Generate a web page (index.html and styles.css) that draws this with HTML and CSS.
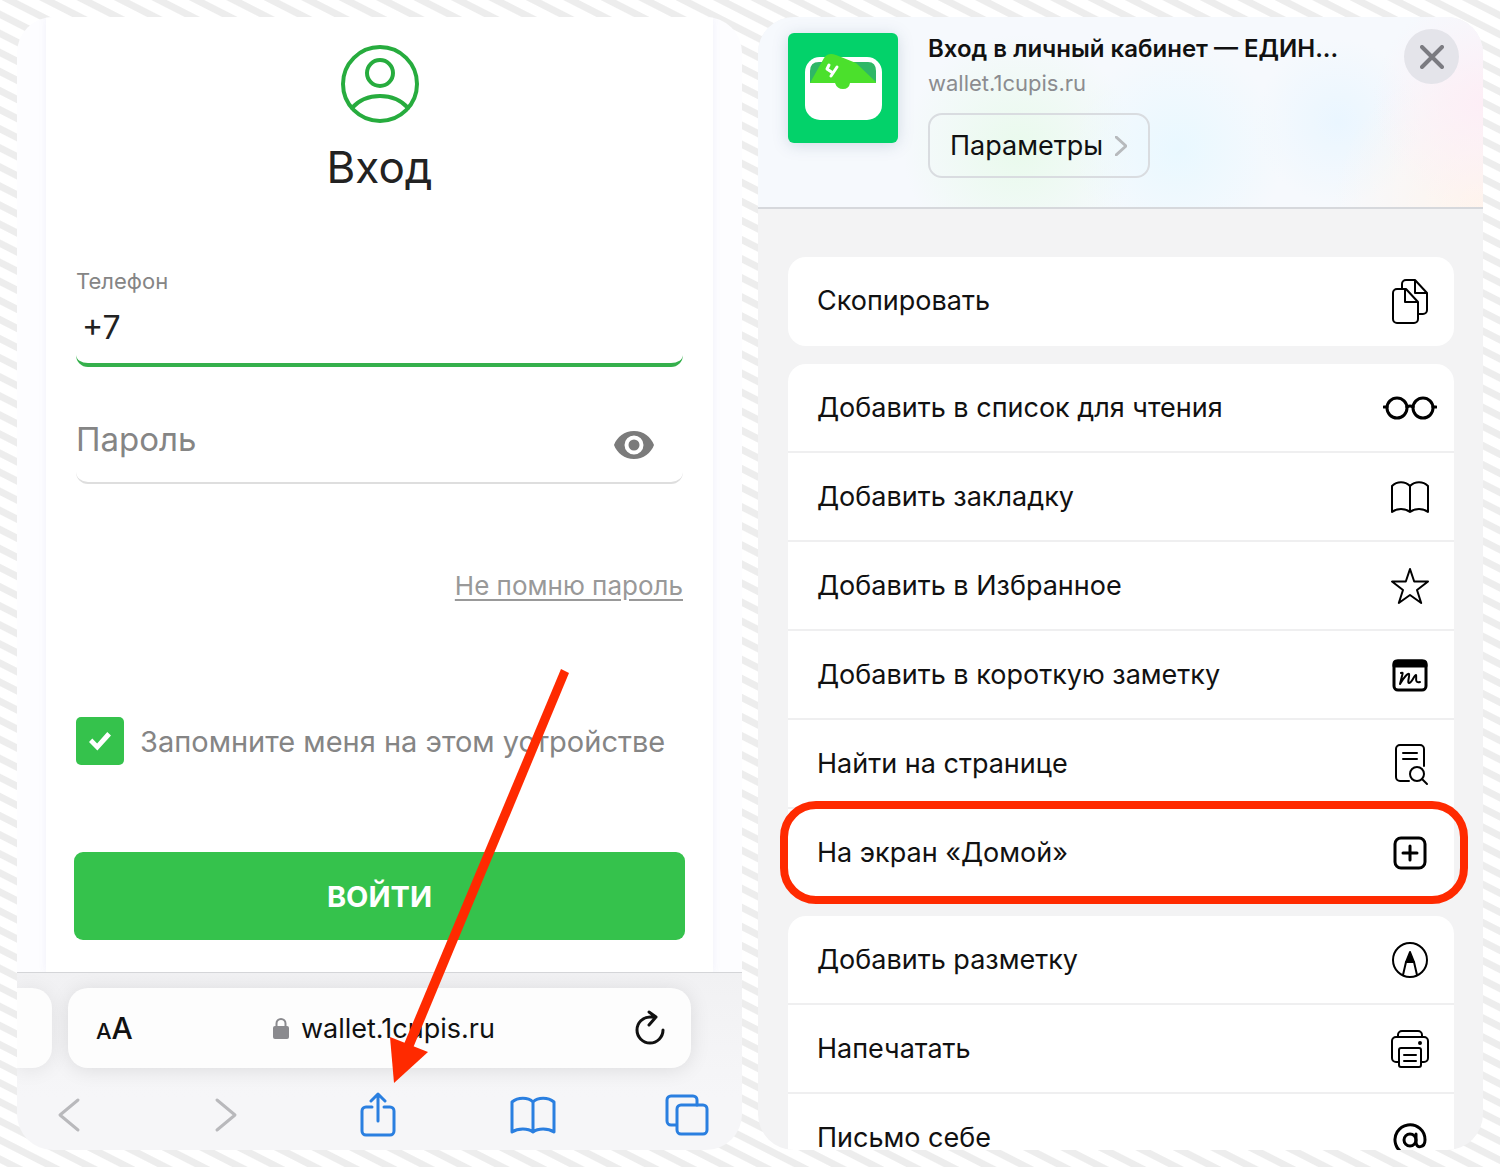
FILE: index.html
```html
<!DOCTYPE html>
<html lang="ru">

<head>
    <meta charset="UTF-8">
    <meta name="viewport" content="width=device-width, initial-scale=1.0">
    <title>Вход в личный кабинет</title>
    <link rel="stylesheet" href="styles.css">
</head>

<body>
    <main class="screens">
        <section class="screen safari">
            <div class="page">
                <form class="login">
                    <svg class="login-icon" viewBox="0 0 78 78">
                        <circle cx="39" cy="39" r="37" />
                        <circle cx="39" cy="28" r="13" />
                        <path d="M11 63C18 55 28 51 39 51s21 4 28 12" />
                    </svg>
                    <h1>Вход</h1>

                    <div class="field field-active">
                        <label for="phone">Телефон</label>
                        <input type="tel" id="phone" name="phone" value="+7">
                    </div>
                    <div class="field field-password">
                        <label for="password">Пароль</label>
                        <input type="password" id="password" name="password">
                        <button type="button" class="eye" aria-label="Показать пароль">
                            <svg viewBox="0 0 42 30">
                                <path fill-rule="evenodd" d="M21 1C11.500 1 4 7 1 15c3 8 10.500 14 20 14s17-6 20-14C38 7 30.500 1 21 1zm0 4.500a9.500 9.500 0 1 1 0 19 9.500 9.500 0 0 1 0-19zm0 4a5.500 5.500 0 1 0 0 11 5.500 5.500 0 0 0 0-11z" />
                            </svg>
                        </button>
                    </div>

                    <a href="#" class="forgot">Не помню пароль</a>

                    <div class="remember">
                        <input type="checkbox" id="remember" name="remember" checked>
                        <label for="remember">Запомните меня на этом устройстве</label>
                    </div>
                    <button type="submit" class="enter">ВОЙТИ</button>
                </form>
            </div>

            <div class="browser-bar">
                <div class="tabs">
                    <div class="tab-prev"></div>
                    <div class="address">
                        <button type="button" class="text-size" aria-label="Размер текста"><small>A</small>A</button>
                        <div class="url">
                            <svg class="lock" viewBox="0 0 16 22">
                                <path class="shackle" d="M3.500 11V6.500a4.500 4.500 0 0 1 9 0V11" />
                                <rect x="0" y="9" width="16" height="13" rx="2" />
                            </svg>
                            <span>wallet.1cupis.ru</span>
                        </div>
                        <button type="button" class="reload" aria-label="Обновить">
                            <svg viewBox="0 0 30 36">
                                <path d="M28 20a13 13 0 1 1-13-13h6M14 2l7 5-7 8" />
                            </svg>
                        </button>
                    </div>
                    <div class="tab-next"></div>
                </div>
                <nav class="tools">
                    <button type="button" class="disabled" aria-label="Назад">
                        <svg viewBox="0 0 46 46"><path d="M32 8L14 23l18 15" /></svg>
                    </button>
                    <button type="button" class="disabled" aria-label="Вперёд">
                        <svg viewBox="0 0 46 46"><path d="M16 8l18 15-18 15" /></svg>
                    </button>
                    <button type="button" aria-label="Поделиться">
                        <svg viewBox="0 0 46 46"><path d="M17 15h-6a4 4 0 0 0-4 4v20a4 4 0 0 0 4 4h24a4 4 0 0 0 4-4V19a4 4 0 0 0-4-4h-6M23 29V2M16 9l7-7 7 7" /></svg>
                    </button>
                    <button type="button" aria-label="Закладки">
                        <svg viewBox="0 0 46 46"><path d="M23 10c-5-5-15-5-21 0v30c6-4 16-4 21 0 5-4 15-4 21 0V10c-6-5-16-5-21 0zM23 10v30" /></svg>
                    </button>
                    <button type="button" aria-label="Вкладки">
                        <svg viewBox="0 0 46 46">
                            <path d="M12 33H7a4 4 0 0 1-4-4V8a4 4 0 0 1 4-4h22a4 4 0 0 1 4 4v5" />
                            <rect x="13" y="13" width="30" height="29" rx="4" />
                        </svg>
                    </button>
                </nav>
            </div>

            <svg class="arrow" viewBox="0 0 190 425">
                <path d="M176 4l8 4L28 383l-9-4z" />
                <path d="M5 372l38 15L9 418z" />
            </svg>
        </section>

        <section class="screen share">
            <header class="share-header">
                <svg class="app-icon" viewBox="0 0 110 110">
                    <rect width="110" height="110" rx="6" fill="#03d26a" />
                    <rect x="17" y="24" width="77" height="63" rx="15" fill="#fff" />
                    <path d="M22 50V38q0-9 9-9h49q8 0 8 9v12z" fill="#2fb766" />
                    <path d="M22 50l14-25q4-6 12-3l20 8 20 19v1H62q-1 6-7 6t-8-6z" fill="#4be02c" />
                    <path d="M41 32l-2 4 6 4M49 34l-6 9" fill="none" stroke="#fff" stroke-width="3" />
                </svg>
                <div class="share-info">
                    <h2>Вход в личный кабинет — ЕДИН...</h2>
                    <p>wallet.1cupis.ru</p>
                    <button type="button" class="options">
                        Параметры
                        <svg viewBox="0 0 12 20"><path d="M1 1l10 9-10 9" /></svg>
                    </button>
                </div>
                <button type="button" class="close" aria-label="Закрыть">
                    <svg viewBox="0 0 24 24"><path d="M2 2l20 20M22 2L2 22" /></svg>
                </button>
            </header>

            <div class="actions">
                <ul class="group">
                    <li><button type="button">Скопировать
                        <svg viewBox="0 0 54 54">
                            <path d="M19 14V10a4 4 0 0 1 4-4h9l12 13v17a4 4 0 0 1-4 4h-4M32 6v13h12" />
                            <path d="M10 19a4 4 0 0 1 4-4h9l12 13v17a4 4 0 0 1-4 4H14a4 4 0 0 1-4-4zM22 15v13h13" />
                        </svg></button></li>
                </ul>
                <ul class="group">
                    <li><button type="button">Добавить в список для чтения
                        <svg class="bold" viewBox="0 0 54 54">
                            <circle cx="14" cy="27" r="10" />
                            <circle cx="40" cy="27" r="10" />
                            <path d="M24 26q3-2 6 0M1 26h3M50 26h3" />
                        </svg></button></li>
                    <li><button type="button">Добавить закладку
                        <svg viewBox="0 0 54 54"><path d="M27 16c-5-5-13-5-18 0v26c5-4 13-4 18 0 5-4 13-4 18 0V16c-5-5-13-5-18 0zM27 16v26" /></svg></button></li>
                    <li><button type="button">Добавить в Избранное
                        <svg viewBox="0 0 54 54"><path d="M27 10l4.200 12.500H45L34 31l4.200 13L27 36l-11.200 8L20 31 9 22.500h13.800z" /></svg></button></li>
                    <li><button type="button">Добавить в короткую заметку
                        <svg class="bold" viewBox="0 0 54 54">
                            <rect x="11" y="13" width="32" height="29" rx="4" />
                            <path class="solid" d="M11 18v-2q0-3 3-3h26q3 0 3 3v2z" />
                            <path class="scribble" d="M18 25c2-1 2 0 1 3l-2 8c4-7 8-11 9-10 1 1-2 9 0 9 3 0 5-8 7-8 1 1-2 9 4 7" />
                        </svg></button></li>
                    <li><button type="button">Найти на странице
                        <svg viewBox="0 0 54 54">
                            <path d="M26 44H17a4 4 0 0 1-4-4V12a4 4 0 0 1 4-4h20a4 4 0 0 1 4 4v17M20 16h14M20 22h14" />
                            <circle cx="34" cy="37" r="7" />
                            <path d="M39 42l5 5" />
                        </svg></button></li>
                    <li class="highlight"><button type="button">На экран «Домой»
                        <svg class="bold" viewBox="0 0 54 54">
                            <rect x="12" y="12" width="30" height="30" rx="6" />
                            <path d="M27 20v14M20 27h14" />
                        </svg></button></li>
                </ul>
                <ul class="group">
                    <li><button type="button">Добавить разметку
                        <svg viewBox="0 0 54 54">
                            <circle cx="27" cy="27" r="17" />
                            <path d="M20 42l3-13h8l3 13" />
                            <path class="solid" d="M23 29l4-10 4 10z" />
                        </svg></button></li>
                    <li><button type="button">Напечатать
                        <svg viewBox="0 0 54 54">
                            <path d="M16 40h-3a4 4 0 0 1-4-4V19a4 4 0 0 1 4-4h28a4 4 0 0 1 4 4v17a4 4 0 0 1-4 4h-3M15 15v-2a4 4 0 0 1 4-4h16a4 4 0 0 1 4 4v2" />
                            <rect x="16" y="26" width="22" height="19" rx="2" />
                            <path d="M21 33h12M21 39h12" />
                            <circle class="solid" cx="37" cy="21" r="1" />
                        </svg></button></li>
                    <li><button type="button">Письмо себе
                        <svg class="bold" viewBox="0 0 54 54">
                            <circle cx="27" cy="29" r="6" />
                            <path d="M33 23v8c0 7 9 6 9-2a15 15 0 1 0-8 13" />
                        </svg></button></li>
                </ul>
            </div>
        </section>
    </main>
</body>

</html>
```

FILE: styles.css
```css
* {
    box-sizing: border-box;
}

body {
    margin: 0;
    font-family: Inter, "Liberation Sans", sans-serif;
    color: #111;
    background: repeating-linear-gradient(27deg, #fff 0, #fff 3px, #ededed 4px, #ededed 10px, #fff 11px, #fff 17px);
}

button,
input {
    font: inherit;
    color: inherit;
}

button {
    padding: 0;
    border: none;
    background: none;
    cursor: pointer;
}

svg {
    display: block;
    flex: none;
    fill: none;
    stroke-linecap: round;
    stroke-linejoin: round;
}

.screens {
    display: grid;
    grid-template-columns: 1fr 1fr;
    gap: 16px;
    height: 100vh;
    padding: 17px;
}

.screen {
    position: relative;
    display: flex;
    flex-direction: column;
    min-width: 0;
    border-radius: 36px;
    overflow: hidden;
}

/* login page */

.page {
    flex: 1;
    min-height: 0;
    padding: 0 29px;
    background: #fdfdff;
}

.login {
    display: flex;
    flex-direction: column;
    height: 100%;
    padding: 28px 28px 0;
    background: #fff;
    box-shadow: 0 0 8px rgba(90, 90, 190, 0.08);
}

.login-icon {
    width: 78px;
    height: 78px;
    align-self: center;
    stroke: #27ac3e;
    stroke-width: 4;
}

h1 {
    margin: 16px 0 70px;
    font-size: 44px;
    line-height: 56px;
    font-weight: 400;
    text-align: center;
    color: #222;
}

.field {
    display: flex;
    margin: 0 2px;
    border: 0 solid transparent;
    border-radius: 12px;
    color: #858585;
}

.field input {
    flex: 1;
    min-width: 0;
    border: none;
    outline: none;
    background: none;
}

.field-active {
    flex-direction: column;
    height: 102px;
    border-bottom: 4px solid #35b04c;
}

.field-active label {
    font-size: 22px;
    line-height: 32px;
}

.field-active input {
    flex: none;
    height: 60px;
    padding: 0 6px;
    font-size: 32px;
    color: #222;
}

.field-password {
    align-items: center;
    height: 88px;
    margin-top: 29px;
    padding-right: 28px;
    border-bottom: 2px solid #dedede;
}

.field-password label {
    font-size: 33px;
}

.eye {
    padding-top: 12px;
}

.eye svg {
    width: 42px;
    height: 30px;
    fill: #7b7b7b;
}

.forgot {
    align-self: flex-end;
    margin: 84px 2px 0;
    font-size: 26px;
    line-height: 36px;
    color: #999;
    text-underline-offset: 4px;
}

.remember {
    display: flex;
    align-items: center;
    gap: 16px;
    margin: 113px 2px 0;
    font-size: 29px;
    color: #858585;
    white-space: nowrap;
}

.remember input {
    appearance: none;
    display: grid;
    place-items: center;
    flex: none;
    width: 48px;
    height: 48px;
    margin: 0;
    border-radius: 5px;
    background: #35c24c;
}

.remember input:checked::before {
    content: "";
    width: 22px;
    height: 20px;
    background: #fff;
    clip-path: polygon(0 55%, 15% 37%, 37% 62%, 83% 5%, 100% 22%, 38% 97%);
}

.enter {
    height: 88px;
    margin-top: 87px;
    border-radius: 9px;
    background: #35c24c;
    font-size: 29px;
    font-weight: 700;
    color: #fff;
}

/* Safari toolbar */

.browser-bar {
    height: 178px;
    padding-top: 15px;
    border-top: 1px solid #d4d5d8;
    background: linear-gradient(#f1f1f3, #f6f6f8 70%);
}

.tabs {
    display: flex;
    gap: 16px;
}

.tab-prev,
.tab-next {
    width: 35px;
    height: 80px;
}

.tab-prev {
    border-radius: 0 20px 20px 0;
    background: #fdfdfd;
    box-shadow: 0 2px 20px rgba(0, 0, 0, 0.08);
}

.address {
    display: flex;
    flex: 1;
    align-items: center;
    justify-content: space-between;
    height: 80px;
    padding: 0 26px 0 28px;
    border-radius: 20px;
    background: #fdfdfd;
    box-shadow: 0 2px 20px rgba(0, 0, 0, 0.1);
    font-size: 27px;
}

.text-size {
    font-size: 30px;
    font-weight: 500;
}

.text-size small {
    font-size: 22px;
}

.url {
    display: flex;
    align-items: center;
    gap: 12px;
}

.lock {
    width: 16px;
    height: 22px;
    fill: #8a8a8e;
}

.lock .shackle {
    fill: none;
    stroke: #8a8a8e;
    stroke-width: 2;
}

.reload svg {
    width: 30px;
    height: 36px;
    stroke: #111;
    stroke-width: 3;
}

.tools {
    display: flex;
    justify-content: space-between;
    padding: 24px 32px 0 29px;
}

.tools svg {
    width: 46px;
    height: 46px;
    stroke: #2a7fe0;
    stroke-width: 3;
}

.tools .disabled svg {
    stroke: #b9b9bc;
}

.arrow {
    position: absolute;
    left: 368px;
    bottom: 60px;
    width: 190px;
    height: 425px;
    fill: #ff2a00;
    pointer-events: none;
}

/* share sheet */

.share {
    background: #f3f3f4;
}

.share-header {
    display: flex;
    flex: none;
    gap: 30px;
    height: 192px;
    padding: 16px 24px 0 30px;
    border-bottom: 2px solid #d6d8dc;
    background:
        radial-gradient(circle at 100% 45%, #fdeef6, transparent 15%),
        radial-gradient(circle at 100% 100%, #fff4ec, transparent 20%),
        radial-gradient(circle at 80% 55%, #eaf6ff, transparent 14%),
        radial-gradient(circle at 58% 70%, #e9f8ff, transparent 24%),
        radial-gradient(circle at 36% 70%, #e9faec, transparent 24%),
        #f6f9fd;
}

.app-icon {
    width: 110px;
    height: 110px;
    filter: drop-shadow(0 2px 8px rgba(0, 40, 80, 0.15));
}

.share-info {
    flex: 1;
    min-width: 0;
}

.share-info h2 {
    margin: 0;
    font-size: 24px;
    line-height: 32px;
    font-weight: 600;
    white-space: nowrap;
}

.share-info p {
    margin: 0 0 12px;
    font-size: 22px;
    line-height: 36px;
    color: #8b8c90;
}

.options {
    display: flex;
    align-items: center;
    gap: 12px;
    height: 65px;
    padding: 0 21px 0 20px;
    border: 2px solid #d9dce0;
    border-radius: 14px;
    font-size: 27px;
}

.options svg {
    width: 12px;
    height: 20px;
    stroke: #b7babd;
    stroke-width: 3;
}

.close {
    display: grid;
    place-items: center;
    flex: none;
    width: 55px;
    height: 55px;
    margin-top: -4px;
    border-radius: 50%;
    background: #e4e4ea;
}

.close svg {
    width: 24px;
    height: 24px;
    stroke: #7b7b81;
    stroke-width: 4;
}

.actions {
    display: flex;
    flex-direction: column;
    gap: 18px;
    padding: 48px 29px 0 30px;
}

.group {
    margin: 0;
    padding: 0;
    list-style: none;
    border-radius: 18px;
    background: #fff;
}

.group li {
    position: relative;
    border-bottom: 2px solid #efeff0;
}

.group li:last-child {
    border-bottom-color: transparent;
}

.group button {
    display: flex;
    align-items: center;
    justify-content: space-between;
    width: 100%;
    height: 87px;
    padding: 0 17px 0 29px;
    font-size: 27px;
    text-align: left;
}

.group svg {
    width: 54px;
    height: 54px;
    stroke: #000;
    stroke-width: 2;
}

.group .bold {
    stroke-width: 3;
}

.group .scribble {
    stroke-width: 2;
}

.group .solid {
    fill: #000;
}

.highlight::after {
    content: "";
    position: absolute;
    inset: -8px -14px -8px -8px;
    border: 8px solid #ff2a00;
    border-radius: 36px;
    pointer-events: none;
}
```
